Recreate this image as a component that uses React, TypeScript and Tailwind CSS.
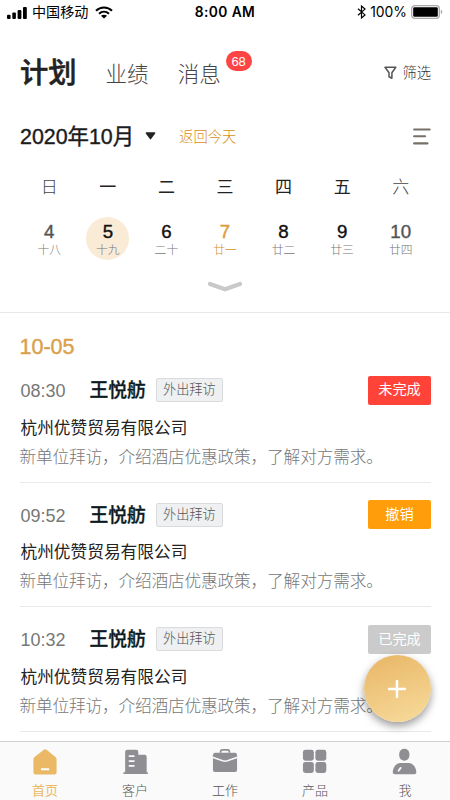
import { clsx } from "clsx";
import type { ReactNode } from "react";

const DAYS = [
  { week: "日", day: "4", lunar: "十八", weekend: true },
  { week: "一", day: "5", lunar: "十九", selected: true },
  { week: "二", day: "6", lunar: "二十" },
  { week: "三", day: "7", lunar: "廿一", today: true },
  { week: "四", day: "8", lunar: "廿二" },
  { week: "五", day: "9", lunar: "廿三" },
  { week: "六", day: "10", lunar: "廿四", weekend: true },
];

const PLANS = [
  { time: "08:30", status: "未完成", color: "bg-[#ff4338]" },
  { time: "09:52", status: "撤销", color: "bg-[#ff9d0a]" },
  { time: "10:32", status: "已完成", color: "bg-[#cbcbcb]" },
];

function StatusBar() {
  return (
    <div className="flex h-[25px] items-center pl-[7px] pr-[7px] text-black">
      <div className="flex flex-1 items-center">
        <svg width="20" height="12" viewBox="0 0 20 12">
          <rect x="0" y="7.7" width="3.6" height="4.3" rx="1" />
          <rect x="5.3" y="5.5" width="3.6" height="6.5" rx="1" />
          <rect x="10.6" y="3" width="3.8" height="9" rx="1" />
          <rect x="16" y="0" width="3.8" height="12" rx="1" />
        </svg>
        <span className="ml-[5px] text-[14.1px] leading-none">中国移动</span>
        <svg className="ml-[7px]" width="18" height="13" viewBox="0 0 18 13">
          <g fill="none" stroke="#000" strokeWidth="2.1">
            <path d="M1 4.7C5.5 .4 12.5 .4 17 4.7" />
            <path d="M4 7.7c2.9-2.6 7.1-2.6 10 0" />
          </g>
          <path d="M9 12.6 6 9.8c1.7-1.4 4.3-1.4 6 0z" />
        </svg>
      </div>
      <span className="font-['Inter'] text-[13.8px] font-semibold tracking-[0.4px]">
        8:00 AM
      </span>
      <div className="flex flex-1 items-center justify-end">
        <svg width="9" height="14" viewBox="0 0 9 14">
          <path
            d="M1 3.7l7 6.2L4.5 13V1L8 4.1 1 10.3"
            fill="none"
            stroke="#000"
            strokeWidth="1.2"
          />
        </svg>
        <span className="ml-[4px] font-['Inter'] text-[13.9px]">100%</span>
        <svg className="ml-[4px]" width="32" height="14" viewBox="0 0 32 14">
          <rect
            x=".7"
            y=".7"
            width="27.6"
            height="12.6"
            rx="3"
            fill="none"
            stroke="#a9a9a9"
            strokeWidth="1.3"
          />
          <rect x="2.2" y="2.2" width="24.6" height="9.6" rx="1.2" />
          <path d="M29.8 4.8c2 .6 2 3.8 0 4.4z" fill="#a9a9a9" />
        </svg>
      </div>
    </div>
  );
}

function Header() {
  return (
    <div className="flex h-[48px] items-center pl-[20px] pr-[19px] mt-[24px]">
      <h1 className="mt-px text-[28.3px] font-medium leading-none text-[#222] [-webkit-text-stroke:0.5px]">
        计划
      </h1>
      <span className="ml-[29px] text-[21.5px] font-light leading-none text-[#444] mt-[6px]">
        业绩
      </span>
      <span className="relative ml-[29px] text-[21.5px] font-light leading-none text-[#444] mt-[6px]">
        消息
        <b className="absolute -top-[14px] left-[48px] flex h-[20px] w-[26px] items-center justify-center rounded-full bg-[#ff4444] font-['Liberation_Sans'] text-[13px] font-normal text-white">
          68
        </b>
      </span>
      <div className="ml-auto flex items-center text-[14.3px] font-light text-[#333]">
        <svg width="13" height="14" viewBox="0 0 13 14">
          <path
            d="M1 1.3h10.8L7.9 6.7v5.5L5 10.8V6.7z"
            fill="none"
            stroke="#555"
            strokeWidth="1.5"
            strokeLinejoin="round"
          />
        </svg>
        <span className="ml-[5px] leading-none">筛选</span>
      </div>
    </div>
  );
}

function Calendar() {
  return (
    <section className="h-[216px] border-b border-[#e8e8e8]">
      <div className="flex h-[78px] items-center pl-[20px] pr-[19px]">
        <h2 className="mt-[3px] text-[21.4px] font-normal leading-none text-[#1c1c1c] [-webkit-text-stroke:0.4px]">
          2020年10月
        </h2>
        <svg className="ml-[11px]" width="11" height="8" viewBox="0 0 11 8">
          <path
            d="M1.4 1h8.2L5.5 6.6z"
            fill="#222"
            stroke="#222"
            strokeWidth="1.5"
            strokeLinejoin="round"
          />
        </svg>
        <a className="mt-[2px] ml-[23px] text-[14.3px] font-light leading-none text-[#d68f20]">
          返回今天
        </a>
        <svg
          className="ml-auto"
          width="18"
          height="17"
          viewBox="0 0 18 17"
          stroke="#777066"
          strokeWidth="2.1"
          strokeLinecap="round"
        >
          <path d="M1.1 1.5h15.6M1.1 8.2h11M1.1 15.4h13.4" />
        </svg>
      </div>
      <div className="grid grid-cols-7 px-[20px]">
        {DAYS.map((d) => (
          <div key={d.day} className="flex flex-col items-center">
            <span
              className={clsx(
                "flex h-[24px] items-center text-[17px] leading-none",
                d.weekend ? "font-light text-[#444]" : "text-[#222]",
              )}
            >
              {d.week}
            </span>
            <div
              className={clsx(
                "mt-[18px] flex h-[43px] w-[43px] flex-col items-center rounded-full pt-[5px]",
                d.selected && "bg-[#faebd7]",
              )}
            >
              <span
                className={clsx(
                  "text-[18.7px] leading-[19px] [-webkit-text-stroke:0.4px]",
                  d.today
                    ? "text-[#dc9c3a]"
                    : d.weekend
                      ? "text-[#555]"
                      : "text-[#111]",
                )}
              >
                {d.day}
              </span>
              <span
                className={clsx(
                  "text-[11.8px] font-light leading-[18px]",
                  d.today ? "text-[#d68f20]" : "text-[#777]",
                )}
              >
                {d.lunar}
              </span>
            </div>
          </div>
        ))}
      </div>
      <svg
        className="mx-auto mt-[20px]"
        width="36"
        height="12"
        viewBox="0 0 36 12"
      >
        <path
          d="M3 4 18 9.3l15-5.3"
          fill="none"
          stroke="#c9c9c9"
          strokeWidth="4.2"
          strokeLinecap="round"
          strokeLinejoin="round"
        />
      </svg>
    </section>
  );
}

function PlanItem({ plan }: { plan: (typeof PLANS)[number] }) {
  return (
    <li className="h-[124.6px] border-b border-[#e9e9e9] pt-[17.5px]">
      <div className="flex h-[29px] items-center">
        <span className="mt-[2px] w-[70px] pl-px text-[18px] leading-none text-[#777]">
          {plan.time}
        </span>
        <span className="mt-[3px] text-[18.8px] font-medium leading-none text-[#0c1a22] [-webkit-text-stroke:0.3px]">
          王悦舫
        </span>
        <span className="ml-[10px] flex h-[24px] w-[67px] items-center justify-center rounded-[2px] border border-[#d9dbdd] bg-[#eff0f2] text-[13.2px] font-light text-[#555]">
          外出拜访
        </span>
        <span
          className={clsx(
            "ml-auto flex h-[29px] w-[63px] items-center justify-center rounded-[2px] text-[14.2px] text-white",
            plan.color,
          )}
        >
          {plan.status}
        </span>
      </div>
      <p className="mt-[9px] pl-px text-[16.7px] leading-[29px] text-[#222]">
        杭州优赞贸易有限公司
      </p>
      <p className="whitespace-nowrap text-[16.7px] font-light leading-[29px] tracking-[-0.18px] text-[#777]">
        新单位拜访，介绍酒店优惠政策，了解对方需求。
      </p>
    </li>
  );
}

function NavItem({
  label,
  active,
  children,
}: {
  label: string;
  active?: boolean;
  children: ReactNode;
}) {
  return (
    <div
      className={clsx(
        "flex flex-1 flex-col items-center pt-[6px]",
        active ? "text-[#ebb866]" : "text-[#8e8e93]",
      )}
    >
      <svg width="28" height="28" viewBox="0 0 28 28" fill="currentColor">
        {children}
      </svg>
      <span
        className={clsx(
          "mt-[7px] text-[13px] leading-[18px]",
          !active && "font-light text-[#555]",
        )}
      >
        {label}
      </span>
    </div>
  );
}

function TabBar() {
  return (
    <nav className="flex h-[59px] shrink-0 border-t border-[#cfcfcf] bg-[#fafafa]">
      <NavItem label="首页" active>
        <path d="M12.8 1.9q1.4-1 2.800 0l9.200 7.400q1.200.9 1.200 2.300v13.700q0 2.200-2.200 2.200H4.200q-2.200 0-2.200-2.200v-13.700q0-1.400 1.200-2.300z" />
        <rect x="9.800" y="21" width="8.600" height="2" rx=".6" fill="#fff" />
      </NavItem>
      <NavItem label="客户">
        <path d="M2 25.200h1.800V4q0-2.200 2.200-2.200h9.200q2.200 0 2.200 2.200v3h6.700q2 0 2 2v16.200h1.200v1.700H2z" />
        <path
          d="M7.500 8.500h6M7.500 13.500h6M7.500 18.500h6"
          stroke="#fafafa"
          strokeWidth="1.8"
        />
      </NavItem>
      <NavItem label="工作">
        <path d="M4 5h20q2.500 0 2.500 2.500v15.200q0 2.300-2.500 2.300H4q-2.500 0-2.500-2.300V7.500Q1.500 5 4 5z" />
        <path
          d="M9.500 5V3.500q0-1.500 1.500-1.500h6q1.500 0 1.500 1.500V5"
          fill="none"
          stroke="currentColor"
          strokeWidth="1.8"
        />
        <path
          d="M1 9.500l10.500 3.800q2.500.8 5 0L27 9.500"
          fill="none"
          stroke="#fafafa"
          strokeWidth="1.6"
        />
      </NavItem>
      <NavItem label="产品">
        <rect x="1.500" y="1.800" width="11.300" height="11.300" rx="2.500" />
        <rect x="14.400" y="1.800" width="11.300" height="11.300" rx="2.500" />
        <rect x="1.500" y="14.500" width="11.300" height="11.300" rx="2.500" />
        <rect x="14.400" y="14.500" width="11.300" height="11.300" rx="2.500" />
      </NavItem>
      <NavItem label="我">
        <rect x="8" y=".8" width="10.600" height="12.400" rx="5.300" />
        <path d="M9 15.500h9c4 0 7.700 4.500 7.700 9.500 0 1.500-.7 2.300-2 2.300H3.300c-1.300 0-2-.8-2-2.300 0-5 3.700-9.500 7.700-9.500z" />
        <path
          d="M7.300 23.600l2.200-3"
          stroke="#fafafa"
          strokeWidth="1.8"
          strokeLinecap="round"
        />
      </NavItem>
    </nav>
  );
}

export default function App() {
  return (
    <div className="relative flex h-[800px] w-[450px] flex-col overflow-hidden bg-white font-['Liberation_Sans','Noto_Sans_CJK_SC',sans-serif]">
      <StatusBar />
      <Header />
      <Calendar />
      <main className="min-h-0 flex-1 overflow-hidden pl-[19.5px] pr-[19px]">
        <h3 className="h-[45px] pt-[20px] text-[21.5px] leading-[28px] text-[#daa04a] [-webkit-text-stroke:0.4px]">
          10-05
        </h3>
        <ul>
          {PLANS.map((p) => (
            <PlanItem key={p.time} plan={p} />
          ))}
        </ul>
      </main>
      <TabBar />
      <button className="absolute left-[363.5px] top-[655px] flex h-[67px] w-[67px] items-center justify-center rounded-full bg-linear-160 from-[#e8b565] to-[#f7dc9c] shadow-[0_4px_8px_rgba(0,0,0,0.4)]">
        <svg width="18" height="18" viewBox="0 0 18 18">
          <path
            d="M9 1v16M1 9h16"
            stroke="#fff"
            strokeWidth="2.5"
            strokeLinecap="round"
          />
        </svg>
      </button>
    </div>
  );
}
